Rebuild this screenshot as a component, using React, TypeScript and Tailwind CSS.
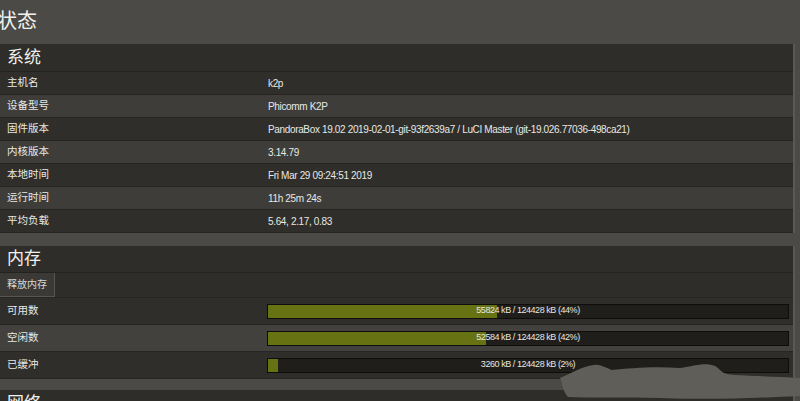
import React from "react";

const sysRows: [string, string][] = [
  ["主机名", "k2p"],
  ["设备型号", "Phicomm K2P"],
  ["固件版本", "PandoraBox 19.02 2019-02-01-git-93f2639a7 / LuCI Master (git-19.026.77036-498ca21)"],
  ["内核版本", "3.14.79"],
  ["本地时间", "Fri Mar 29 09:24:51 2019"],
  ["运行时间", "11h 25m 24s"],
  ["平均负载", "5.64, 2.17, 0.83"],
];

const memRows: { label: string; text: string; pct: number }[] = [
  { label: "可用数", text: "55824 kB / 124428 kB (44%)", pct: 44 },
  { label: "空闲数", text: "52584 kB / 124428 kB (42%)", pct: 42 },
  { label: "已缓冲", text: "3260 kB / 124428 kB (2%)", pct: 2 },
];

const font = { fontFamily: '"Liberation Sans", "Noto Sans CJK SC", sans-serif' };

function Bar({ text, pct }: { text: string; pct: number }) {
  return (
    <div className="relative h-[15px] w-[522px] border border-[#0e0d0b] bg-[#1f1e1b]">
      <div className="h-full bg-[#677312]" style={{ width: `${pct}%` }} />
      <div className="absolute inset-0 flex items-center justify-center text-[9px] tracking-[-0.45px] text-[#e6e6e2]">
        {text}
      </div>
    </div>
  );
}

export default function App() {
  return (
    <div className="relative h-[401px] w-[800px] overflow-hidden bg-[#4b4a46] text-[#e8e8e4]" style={font}>
      <h2 className="ml-[-3px] flex h-[44px] items-center pt-[2px] pb-[4px] text-[20px] font-normal text-[#f2f2ee]">状态</h2>

      {/* 系统 */}
      <div className="w-[795px] border-r-2 border-[#5a5955] bg-[#2e2d29]">
        <div className="flex h-[28px] items-center border-b border-[#232220] pl-[7px] text-[17px] text-[#f0f0ec]">系统</div>
        {sysRows.map(([k, v], i) => (
          <div
            key={k}
            className={`flex h-[23px] items-center border-b border-[#262521] text-[10.5px] ${i % 2 === 0 ? "bg-[#2f2e2a]" : "bg-[#3e3d39]"}`}
          >
            <div className="w-[268px] shrink-0 pl-[7px]">{k}</div>
            <div className="text-[10px] tracking-[-0.35px]">{v}</div>
          </div>
        ))}
      </div>

      <div className="h-[13px]" />

      {/* 内存 */}
      <div className="w-[795px] border-r-2 border-[#5a5955] bg-[#2e2d29]">
        <div className="flex h-[27px] items-center border-b border-[#232220] pl-[7px] text-[17px] text-[#f0f0ec]">内存</div>
        <div className="flex h-[25px] items-stretch border-b border-[#262521]">
          <div className="flex w-[55px] items-center justify-center border-r border-b border-[#56554f] bg-[#3a3935] text-[10px] text-[#d8d8d4]">
            释放内存
          </div>
        </div>
        {memRows.map((r, i) => (
          <div
            key={r.label}
            className={`flex h-[27px] items-center border-b border-[#262521] text-[10.5px] ${i % 2 === 0 ? "bg-[#2f2e2a]" : "bg-[#42413d]"}`}
          >
            <div className="w-[267px] shrink-0 pl-[7px]">{r.label}</div>
            <Bar text={r.text} pct={r.pct} />
          </div>
        ))}
      </div>

      <div className="h-[11px]" />

      {/* 网络 */}
      <div className="w-[795px] border-r-2 border-[#5a5955] bg-[#2e2d29]">
        <div className="flex h-[27px] items-center pl-[7px] text-[17px] text-[#f0f0ec]">网络</div>
      </div>

      {/* scribble over lower right corner */}
      <svg className="absolute left-[560px] top-[360px] fill-[#5f5e59]" width="240" height="41" viewBox="0 0 240 41">
        <path d="M0 18 C10 14 22 6 34 5 C40 4 46 8 52 10 C70 8 95 6 120 8 C135 6 145 2 155 6 C162 10 160 14 175 15 C195 16 220 17 240 18 L240 36 C200 38 150 40 100 38 C60 37 30 38 8 37 C2 30 3 24 0 18 Z" />
      </svg>
    </div>
  );
}
